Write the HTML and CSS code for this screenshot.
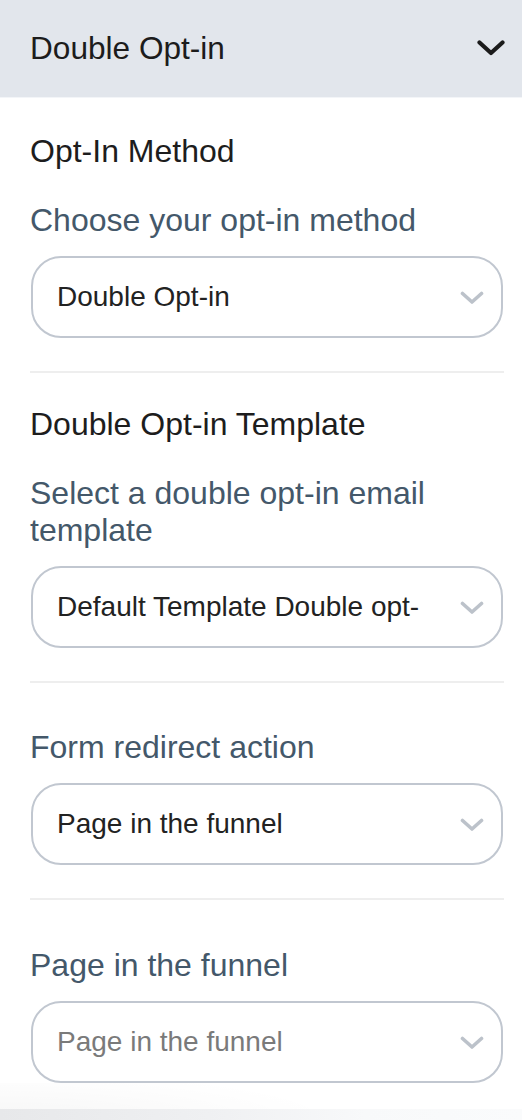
FILE: index.html
```html
<!DOCTYPE html>
<html lang="en">
<head>
<meta charset="utf-8">
<title>Double Opt-in</title>
<link rel="stylesheet" href="styles.css">
</head>
<body>
<div class="panel">
  <header class="panel-header">
    <span class="panel-title">Double Opt-in</span>
    <svg class="panel-chevron" width="28" height="16" viewBox="0 0 28 16" aria-hidden="true">
      <polyline points="2.5,2.5 14,13 25.5,2.5" fill="none" stroke="#1b1b1b" stroke-width="4.2" stroke-linecap="round" stroke-linejoin="round"/>
    </svg>
  </header>
  <main class="panel-body">
    <section class="group group--first">
      <h3 class="group-title">Opt-In Method</h3>
      <div class="field-label">Choose your opt-in method</div>
      <div class="select">
        <span class="select-value">Double Opt-in</span>
        <svg class="select-chevron" width="24" height="14" viewBox="0 0 24 14" aria-hidden="true"><polyline points="2.5,2.5 12,11 21.5,2.5" fill="none" stroke="#bcc2ca" stroke-width="3.6" stroke-linecap="round" stroke-linejoin="round"/></svg>
      </div>
    </section>
    <section class="group">
      <h3 class="group-title">Double Opt-in Template</h3>
      <div class="field-label">Select a double opt-in email template</div>
      <div class="select">
        <span class="select-value">Default Template Double opt-</span>
        <svg class="select-chevron" width="24" height="14" viewBox="0 0 24 14" aria-hidden="true"><polyline points="2.5,2.5 12,11 21.5,2.5" fill="none" stroke="#bcc2ca" stroke-width="3.6" stroke-linecap="round" stroke-linejoin="round"/></svg>
      </div>
    </section>
    <section class="group group--plain">
      <div class="field-label">Form redirect action</div>
      <div class="select">
        <span class="select-value">Page in the funnel</span>
        <svg class="select-chevron" width="24" height="14" viewBox="0 0 24 14" aria-hidden="true"><polyline points="2.5,2.5 12,11 21.5,2.5" fill="none" stroke="#bcc2ca" stroke-width="3.6" stroke-linecap="round" stroke-linejoin="round"/></svg>
      </div>
    </section>
    <section class="group group--plain group--last">
      <div class="field-label">Page in the funnel</div>
      <div class="select">
        <span class="select-value select-value--placeholder">Page in the funnel</span>
        <svg class="select-chevron" width="24" height="14" viewBox="0 0 24 14" aria-hidden="true"><polyline points="2.5,2.5 12,11 21.5,2.5" fill="none" stroke="#bcc2ca" stroke-width="3.6" stroke-linecap="round" stroke-linejoin="round"/></svg>
      </div>
    </section>
  </main>
  <div class="panel-foot"></div>
</div>
</body>
</html>
```

FILE: styles.css
```css
* { box-sizing: border-box; }

html, body {
  margin: 0;
  padding: 0;
  background: #ffffff;
}

body {
  font-family: "Liberation Sans", Arial, Helvetica, sans-serif;
  width: 522px;
  height: 1120px;
  overflow: hidden;
}

.panel {
  display: flex;
  flex-direction: column;
  height: 1120px;
}

.panel-header {
  height: 98px;
  flex: none;
  display: flex;
  align-items: center;
  justify-content: space-between;
  padding: 0 17px 1px 30px;
  background: #e2e6ec;
  border-bottom: 1px solid #f3f5f8;
}

.panel-title {
  font-size: 31.6px;
  color: #1c1c1c;
  line-height: normal;
}

.panel-chevron {
  display: block;
  margin-top: -1px;
}

.panel-body {
  flex: 1;
  padding: 0 18px 0 30px;
}

.group {
  padding: 33px 0 33px 0;
  border-bottom: 2px solid #eeeeee;
}

.group--first { padding-top: 35px; }
.group--plain { padding-top: 46px; }
.group--last { border-bottom: 0; padding-bottom: 0; padding-top: 47px; }

.group-title {
  margin: 0 0 32px 0;
  font-weight: normal;
  font-size: 32px;
  line-height: normal;
  color: #1d1d1d;
}

.field-label {
  margin: 0 0 17px 0;
  font-size: 32px;
  line-height: normal;
  color: #44586a;
  padding-right: 40px;
}

.select {
  height: 82px;
  margin-left: 1px;
  margin-right: 1px;
  display: flex;
  align-items: center;
  justify-content: space-between;
  padding: 0 17px 0 24px;
  border: 2px solid #c1c7d0;
  border-radius: 30px;
  background: #ffffff;
}

.select-value {
  font-size: 28px;
  color: #222222;
  white-space: nowrap;
  overflow: hidden;
}

.select-value--placeholder { color: #7a7a7a; }

.select-chevron {
  display: block;
  flex: none;
  margin-top: 1px;
}

.panel-foot {
  flex: none;
  height: 38px;
  background:
    linear-gradient(to right, #e7e8ea 0%, #eff0f2 40%, #f8f9fa 70%, #fafbfc 100%) bottom / 100% 12px no-repeat,
    radial-gradient(ellipse 340px 50px at 0% 100%, rgba(0,0,0,0.035), rgba(0,0,0,0) 100%);
}
```
